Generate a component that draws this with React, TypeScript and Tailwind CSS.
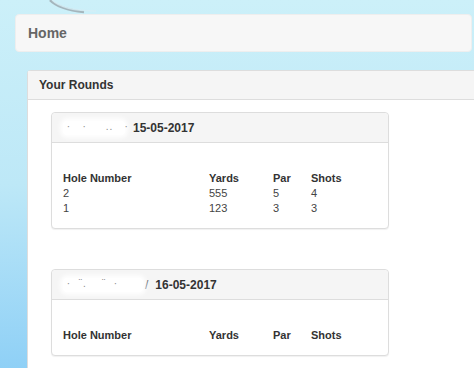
import React from "react";

const rounds = [
  { date: "15-05-2017", blurW: "w-[64px]", slash: false, rows: [["2", "555", "5", "4"], ["1", "123", "3", "3"]] },
  { date: "16-05-2017", blurW: "w-[80px]", slash: true, rows: [] as string[][] },
];

function Blur({ w, dots }: { w: string; dots: string }) {
  return (
    <span className={`relative inline-block h-[14px] ${w} rounded-[4px] bg-white shadow-[0_0_4px_3px_rgba(255,255,255,0.9)]`}>
      <span className="absolute left-0 top-[-2px] whitespace-pre text-[10px] text-[#8a8a8a] tracking-[1px]">{dots}</span>
    </span>
  );
}

export default function App() {
  return (
    <div
      className="relative w-[474px] h-[368px] overflow-hidden bg-gradient-to-b from-[#ccf0f9] via-[#bde8f7] to-[#8fd0f6]"
      style={{ fontFamily: '"Liberation Sans", Arial, sans-serif' }}
    >
      <svg className="absolute left-0 top-0" width="120" height="20" viewBox="0 0 120 20">
        <path d="M50 0 C 56 6, 66 10, 84 12" stroke="#9aa6ad" strokeWidth="2.5" fill="none" opacity="0.8" />
        <path d="M52 0 C 60 8, 74 11, 96 11" stroke="#d6eef5" strokeWidth="1.5" fill="none" opacity="0.8" />
      </svg>
      <div className="pt-[14px] pl-[15px] pr-[2px]">
        <div className="h-[38px] flex items-center pl-[12px] rounded-[4px] bg-[#f7f7f7] border border-[#eeeeee]">
          <span className="text-[14px] font-bold text-[#666]">Home</span>
        </div>
      </div>
      <div className="mt-[18px] ml-[27px] bg-white border-l border-t border-[#dddddd] rounded-tl-[4px] h-[300px]">
        <div className="h-[29px] flex items-center pl-[11px] bg-[#f5f5f5] border-b border-[#dddddd]">
          <span className="text-[12px] font-bold text-[#333]">Your Rounds</span>
        </div>
        <div className="pt-[12px] pl-[23px] flex flex-col gap-[40px]">
          {rounds.map((r, i) => (
            <div key={i} className="w-[338px] border border-[#dddddd] rounded-[4px] bg-white shadow-[0_1px_1px_rgba(0,0,0,0.06)]">
              <div className="h-[30px] flex items-center pl-[11px] bg-[#f5f5f5] border-b border-[#dddddd] rounded-t-[4px]">
                {r.slash ? (
                  <>
                    <Blur w="w-[80px]" dots={" ·  ¨.    ¨  ·"} />
                    <span className="ml-[2px] text-[12px] text-[#555]">/</span>
                    <span className="ml-[7px] text-[12px] font-bold text-[#333]">{r.date}</span>
                  </>
                ) : (
                  <>
                    <Blur w="w-[62px]" dots={" ·   ·     ..   ·"} />
                    <span className="ml-[8px] text-[12px] font-bold text-[#333]">{r.date}</span>
                  </>
                )}
              </div>
              <div className="pt-[28px] pb-[12px] pl-[11px] text-[11px] leading-[15px] text-[#333]">
                <div className="grid grid-cols-[146px_64px_38px_40px] font-bold">
                  <span>Hole Number</span>
                  <span>Yards</span>
                  <span>Par</span>
                  <span>Shots</span>
                </div>
                {r.rows.map((row, j) => (
                  <div key={j} className="grid grid-cols-[146px_64px_38px_40px] text-[#444]">
                    {row.map((c, k) => (
                      <span key={k}>{c}</span>
                    ))}
                  </div>
                ))}
              </div>
            </div>
          ))}
        </div>
      </div>
    </div>
  );
}
